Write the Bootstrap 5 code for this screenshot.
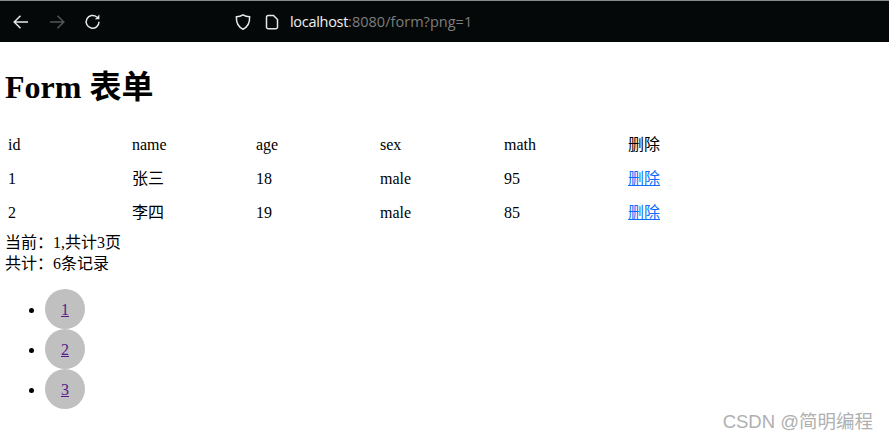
<!DOCTYPE html>
<html lang="zh">
<head>
<meta charset="utf-8">
<title>Form</title>
<link href="https://cdn.jsdelivr.net/npm/bootstrap@5.3.0/dist/css/bootstrap.min.css" rel="stylesheet">
<style>
html,body{height:100%}
body{font-family:"Liberation Serif","Noto Sans CJK SC",serif;font-size:16px;line-height:21px;color:#000;background:#fff;overflow:hidden;position:relative}
.chrome-bar{height:42px;background:#050808;border-top:1px solid #8a8a8a;font-family:"Open Sans","Noto Sans",sans-serif;font-size:14.5px}
.nav-ico{width:20px;height:20px;fill:none;stroke:#e8e8e8;stroke-width:1.5;flex:none}
.nav-dim{stroke:#555}
.nav-back{margin-left:11px}
.nav-fwd{margin-left:16px}
.nav-reload{margin-left:16px}
.nav-shield{margin-left:130px}
.nav-page{margin-left:9px}
.addr-host{color:#f2f2f2;margin-left:8px;letter-spacing:-.3px;font-weight:500}
.addr-rest{color:#7d7d7d;letter-spacing:.03px}
.page-wrap{padding-left:5px}
.page-title{font-family:inherit;font-size:32px;font-weight:700;line-height:37px;margin:27px 0 21px;padding-top:0}
.data-tbl{border-collapse:separate;border-spacing:2px;width:auto;line-height:18px;font-size:16px}
.data-tbl td{width:122px;min-width:122px;padding:7px 1px;height:32px;vertical-align:middle}
.data-tbl a{color:#0d6efd}
.tbl-foot{margin-top:1px}
.pager{list-style:disc;margin:15px 0 0;padding:0 0 0 40px}
.pager li{height:40px;line-height:40px}
.pager a{display:block;width:40px;height:40px;border-radius:50%;background:#c0c0c0;color:#551a8b;text-align:center;line-height:41px}
.mark-csdn{position:absolute;right:16px;bottom:8px;color:#b0b0b0;font-family:"Liberation Sans","Noto Sans CJK SC",sans-serif;font-size:18.5px;line-height:22px}
</style>
</head>
<body>
<div class="chrome-bar d-flex align-items-center">
  <svg class="nav-ico nav-back" viewBox="0 0 20 20"><path d="M17 10H3.5M9.5 3.8 3.2 10l6.3 6.2"/></svg>
  <svg class="nav-ico nav-dim nav-fwd" viewBox="0 0 20 20"><path d="M3 10h13.5M10.5 3.8l6.3 6.2-6.3 6.2"/></svg>
  <svg class="nav-ico nav-reload" viewBox="0 0 20 20"><path d="M16 9.8A6.4 6.4 0 1 1 13.8 5"/><path d="M16.4 2.6v4.6h-4.6z" fill="#e8e8e8" stroke="none"/></svg>
  <svg class="nav-ico nav-shield" viewBox="0 0 20 20"><path d="M10 2.8c2 1.2 4.2 1.8 6.6 2 .3 5.7-1.6 10-6.6 12.4C5 14.8 3.1 10.5 3.4 4.8c2.4-.2 4.600-.8 6.600-2z"/></svg>
  <svg class="nav-ico nav-page" viewBox="0 0 20 20"><path d="M6.300 3.500h5.200L15.500 7.500V15a1.800 1.800 0 0 1-1.800 1.800H6.300A1.800 1.800 0 0 1 4.500 15V5.300a1.800 1.800 0 0 1 1.800-1.800z"/></svg>
  <span class="addr-host">localhost</span><span class="addr-rest">:8080/form?png=1</span>
</div>
<div class="page-wrap">
  <h1 class="page-title">Form 表单</h1>
  <table class="data-tbl">
    <tr><td>id</td><td>name</td><td>age</td><td>sex</td><td>math</td><td>删除</td></tr>
    <tr><td>1</td><td>张三</td><td>18</td><td>male</td><td>95</td><td><a href="#">删除</a></td></tr>
    <tr><td>2</td><td>李四</td><td>19</td><td>male</td><td>85</td><td><a href="#">删除</a></td></tr>
  </table>
  <div class="tbl-foot">当前：1,共计3页</div>
  <div>共计：6条记录</div>
  <ul class="pager">
    <li><a href="#">1</a></li>
    <li><a href="#">2</a></li>
    <li><a href="#">3</a></li>
  </ul>
</div>
<div class="mark-csdn">CSDN @简明编程</div>
</body>
</html>
